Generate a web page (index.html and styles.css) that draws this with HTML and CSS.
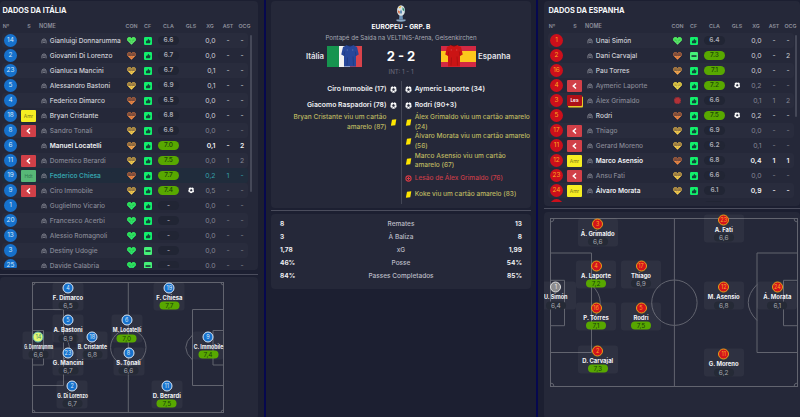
FILE: index.html
```html
<!DOCTYPE html>
<html lang="pt">
<head>
<meta charset="utf-8">
<title>Itália 2 - 2 Espanha</title>
<link rel="stylesheet" href="styles.css">
</head>
<body>
<svg width="0" height="0" class="defs" aria-hidden="true">
  <defs>
    <symbol id="person" viewBox="0 0 10 10"><path d="M1.6 9V5a3.4 3.4 0 0 1 6.8 0v4M3.4 7.6q1.6-1.4 3.2 0" fill="none" stroke="currentColor" stroke-width="1.5"/><circle cx="5" cy="4.6" r="1.3" fill="currentColor"/></symbol>
    <symbol id="heart" viewBox="0 0 18 16"><path d="M9 15.6 1.5 8.2C-.6 5.6.4 1.2 4.2.7 6.400.4 8 1.400 9 3c1-1.600 2.600-2.600 4.800-2.300C17.600 1.200 18.600 5.600 16.500 8.200Z"/></symbol>
    <symbol id="thumb" viewBox="0 0 16 16"><rect width="16" height="16" rx="2.500" fill="#12f06c"/><path d="M4 7.500h2.500L8.500 3.500q1.700 0 1.300 3.200h2.400q.9.600.6 1.800l-.8 3.300q-.3.900-1.200.9H4Z" fill="#12443a"/></symbol>
    <symbol id="minus" viewBox="0 0 16 16"><rect width="16" height="16" rx="2.500" fill="#45f078"/><rect x="3" y="6.300" width="10" height="3.600" fill="#1d4a3b"/></symbol>
    <symbol id="ball" viewBox="0 0 14 14"><circle cx="7" cy="7" r="6.300" fill="#fff"/><path d="m7 4.200 2.700 2-1 3.200H5.300l-1-3.200Z" fill="#252839"/><path d="M7 0v2.400M.4 5.600l2 .7M13.600 5.600l-2 .7M3 12.600l1.400-2M11 12.600l-1.400-2" stroke="#252839" stroke-width="1.800"/></symbol>
    <symbol id="card" viewBox="0 0 12 14"><path d="M3 1.400 11.600.4 9.600 12.600.8 13.400Z" fill="#ffe600"/></symbol>
    <symbol id="injury" viewBox="0 0 14 14"><circle cx="7" cy="7" r="5.200" fill="none" stroke="#d63b45" stroke-width="2.200"/><path d="M7 4v6M4 7h6" stroke="#d63b45" stroke-width="2"/></symbol>
    <symbol id="shirt" viewBox="0 0 36 46"><path d="M12 2q6 3 12 0l8 4 3.500 15-5.500 3V45H6V24L.5 21 4 6Z" fill="currentColor"/><path d="M12 2q6 5 12 0" fill="none" stroke="#0006" stroke-width="1.500"/><path d="M6 24 7.500 15M30 24 28.500 15M13 27l-1 16M24 25l1 18" stroke="#0003" stroke-width="1.500" fill="none"/><path d="M11.500 12h2M22.500 12h2" stroke="#fff6" stroke-width="1.500"/></symbol>
  </defs>
</svg>
<main class="screen">
  <section class="col col-left">
    <div class="panel squad squad-ita">
      <h2>DADOS DA ITÁLIA</h2>
      <div class="table" id="ita-table"></div>
    </div>
    <div class="rule"></div>
    <div class="panel pitch-panel ita" id="ita-pitch">
      <svg class="pitch" width="258" height="140" viewBox="0 277 258 140">
        <rect x="32.500" y="282.500" width="191" height="130"/>
        <path d="M128.300 282.500v130M32.500 309.500h31v76h-31M32.500 330.500h11v34.500h-11M223.500 309.500h-31v76h31M223.500 330.500h-10.500v34.500h10.500M63.500 335q12 12.500 0 25M192.500 335q-13.500 12.500 0 25M35 282.500q0 2.500-2.500 2.500M221 282.500q0 2.500 2.500 2.500M35 412.500q0-2.500-2.500-2.500M221 412.500q0-2.500 2.500-2.500"/>
        <circle cx="128.300" cy="347.400" r="17.700"/>
      </svg>
    </div>
  </section>
  <section class="col col-mid">
    <div class="panel match">
      <svg class="cup" viewBox="0 0 24 34"><path d="M3 29h18v3q-9 3-18 0Z" fill="#8ba8c4"/><path d="M9 20h6l1 9H8Z" fill="#6d93b8"/><ellipse cx="12" cy="11" rx="8" ry="10.500" fill="#d9e2e4"/><path d="M7 5q3-4 6-3l-3 5Z" fill="#e8b23c"/><path d="M15 4q5 4 4 9l-4-3Z" fill="#2e8a70"/><path d="M5 10q1 6 4 8l1-5Z" fill="#d46a45"/><path d="m12 9 2 5-2 5-2-5Z" fill="#4b7bad"/></svg>
      <h1>EUROPEU - GRP. B</h1>
      <p class="venue">Pontapé de Saída na VELTINS-Arena, Gelsenkirchen</p>
      <div class="score-row">
        <span class="team home">Itália</span>
        <span class="flag flag-ita"><svg class="shirt"><use href="#shirt"/></svg></span>
        <span class="score">2 - 2</span>
        <span class="flag flag-esp"><svg class="shirt"><use href="#shirt"/></svg></span>
        <span class="team away">Espanha</span>
      </div>
      <p class="half">INT: 1 - 1</p>
      <div class="events">
        <ul class="ev-home">
          <li class="goal"><span>Ciro Immobile (17)</span><svg><use href="#ball"/></svg></li>
          <li class="goal"><span>Giacomo Raspadori (78)</span><svg><use href="#ball"/></svg></li>
          <li class="booking two"><span>Bryan Cristante viu um cartão<br>amarelo (87)</span><svg><use href="#card"/></svg></li>
        </ul>
        <ul class="ev-away">
          <li class="goal"><svg><use href="#ball"/></svg><span>Aymeric Laporte (34)</span></li>
          <li class="goal"><svg><use href="#ball"/></svg><span>Rodri (90+3)</span></li>
          <li class="booking two"><svg><use href="#card"/></svg><span>Álex Grimaldo viu um cartão amarelo<br>(24)</span></li>
          <li class="booking two"><svg><use href="#card"/></svg><span>Álvaro Morata viu um cartão amarelo<br>(56)</span></li>
          <li class="booking two"><svg><use href="#card"/></svg><span>Marco Asensio viu um cartão<br>amarelo (67)</span></li>
          <li class="hurt"><svg><use href="#injury"/></svg><span>Lesão de Álex Grimaldo (76)</span></li>
          <li class="booking"><svg><use href="#card"/></svg><span>Koke viu um cartão amarelo (83)</span></li>
        </ul>
      </div>
    </div>
    <div class="rule"></div>
    <div class="panel stats">
      <div><b>8</b><span>Remates</span><b>13</b></div>
      <div><b>3</b><span>À Baliza</span><b>8</b></div>
      <div><b>1,78</b><span>xG</span><b>1,99</b></div>
      <div><b>46%</b><span>Posse</span><b>54%</b></div>
      <div><b>84%</b><span>Passes Completados</span><b>85%</b></div>
    </div>
  </section>
  <section class="col col-right">
    <div class="panel squad squad-esp">
      <h2>DADOS DA ESPANHA</h2>
      <div class="table" id="esp-table"></div>
    </div>
    <div class="rule"></div>
    <div class="panel pitch-panel esp" id="esp-pitch">
      <svg class="pitch" width="256" height="205" viewBox="544 212 256 205">
        <rect x="550.500" y="218.500" width="247" height="168"/>
        <path d="M674.400 218.500v168M550.500 253h41v99.500h-41M550.500 280.300h14v45.400h-14M797.500 253h-40.500v99.500h40.500M797.500 280.300h-14v45.400h14M591.500 284.500q17.500 18 0 36M757 284.500q-17.500 18 0 36M554 218.500q0 3.500-3.500 3.500M794 218.500q0 3.500 3.500 3.500M554 386.500q0-3.500-3.500-3.500M794 386.500q0-3.500 3.500-3.500"/>
        <circle cx="674.400" cy="302.700" r="22.700"/>
      </svg>
    </div>
  </section>
</main>
<script src="app.js"></script>
</body>
</html>
```
FILE: styles.css
```css
* { box-sizing: border-box; margin: 0; padding: 0; }
body {
  width: 800px; height: 417px; overflow: hidden;
  background: #1c1f31; color: #e4e5ea;
  font-family: Inter, "Liberation Sans", sans-serif; font-size: 7px;
}
.defs { display: block; height: 0; }
svg { flex: none; }
.screen { display: grid; grid-template-columns: 264px 274px 262px; height: 417px; }
.col { display: flex; flex-direction: column; padding-top: 1px; min-width: 0; }
.col-left { padding-right: 6px; }
.col-mid { border-left: 2px solid #06084f; border-right: 2px solid #06084f; padding-left: 5px; padding-right: 5px; }
.col-right { padding-left: 6px; }
.panel { background: #252839; border-radius: 4px; flex: none; overflow: hidden; }
.rule { height: 1px; background: #4b4d5d; flex: none; }

/* squad tables */
.squad { padding: 5px 0 0 1px; position: relative; }
.squad-ita { height: 269px; }
.squad-esp { height: 205px; padding-left: 3px; }
.squad h2 { font-size: 7.400px; line-height: 10px; font-weight: 700; color: #f5f6f8; padding-left: 1.400px; white-space: nowrap; }
.table { overflow: hidden; margin-top: 3px; width: 252px; }
#ita-table { height: 248.500px; }
#esp-table { height: 182.500px; }
.row {
  display: grid; height: 15px; width: 246px; align-items: center; border-radius: 3px; margin-left: 1px;
  grid-template-columns: 17px 20px 9px 75px 17px 15px 27px 18px 20px 16px 12px;
  color: #cfd0d7; white-space: nowrap; justify-items: center;
}
.row.odd { background: #292c3d; }
.row.head { height: 14px; padding-bottom: 1px; font-size: 5.300px; font-weight: 600; color: #8e909c; }
.head .name { padding-left: 0; margin-left: -9px; font-size: 5.500px; font-weight: 600; }
.head .num0 { margin-left: -9px; }
.head .ocg { margin-left: 5px; }
.name { justify-self: start; padding-left: 1.800px; font-size: 6.550px; font-weight: 500; }
.on .name, .on .n { color: #f0f1f4; font-weight: 600; }
.off { color: #858794; }
.hot { color: #35a0aa; background: #202c3c; }
.row.hot .name { font-weight: 600; }
.no { width: 13px; height: 13px; border-radius: 50%; background: #1671cc; color: #cfe6fb; font-size: 6.500px; line-height: 13px; text-align: center; }
.squad-esp .no { background: #cb0f1b; color: #ffa51f; }
.tag { width: 15px; height: 12px; border-radius: 1px; font-size: 4.800px; line-height: 12px; text-align: center; display: block; margin-left: -1px; }
.tag.amr { background: #f5ed22; color: #77731f; }
.tag.hdt { background: #57b877; color: #2f7651; }
.tag.les { background: #ad1018; color: #fff; height: 11px; line-height: 10px; font-weight: 600; box-shadow: 1px 1.500px 0 #e8c928; }
.tag.sub { background: #d14048; }
.tag svg { width: 15px; height: 12px; display: block; }
.person { width: 6px; height: 6px; color: #8b8d99; margin-left: 1.500px; }
.heart { width: 9px; height: 8px; }
.cf { width: 8px; height: 8px; }
.inj { width: 7px; height: 7px; border-radius: 50%; background: #b23238; border: 1px dotted #782a35; }
.pill { width: 20.500px; height: 9px; border-radius: 4.500px; background: #212534; color: #a9abb5; font-size: 6.500px; font-weight: 600; line-height: 9px; text-align: center; display: block; }
.pill.good { background: #58a800; color: #1c4708; font-weight: 500; }
.gls { width: 6.500px; height: 6.500px; }
.n { font-size: 6.800px; }
.n.xg { justify-self: end; padding-right: 4.500px; }
.thumbbar { position: absolute; right: 6px; top: 34px; width: 2px; height: 157px; border-radius: 1px; background: #454858; }
.squad-esp .thumbbar { right: 3px; height: 82px; }

/* pitches */
.pitch-panel { position: relative; }
.ita.pitch-panel { height: 142px; }
.esp.pitch-panel { height: 207px; }
.pitch { display: block; fill: none; stroke: #62646f; stroke-width: 1; }
.player {
  position: absolute; width: 40px; height: 28px; border-radius: 3px; transform: translate(-50%, -5.500px);
  background: #ffffff0b; display: flex; flex-direction: column; align-items: center; white-space: nowrap;
}
.ita .player { width: 31px; }
.disc { width: 11px; height: 11px; flex: none; border-radius: 50%; border: 1px solid #d8e6f5; background: #1671cc; color: #d6ebff; font-size: 5.500px; line-height: 9px; text-align: center; }
.esp .disc { background: #d3141c; border-color: #e9a115; color: #ffa51f; }
.esp .gk .disc { background: #8c8c8e; border-color: #e0e0e0; color: #eee; }
.ita .gk .disc { background: #e4fa72; border-color: #5cb6b0; color: #469070; }
.pname { font-size: 5.900px; font-weight: 700; color: #f2f3f6; line-height: 8px; }
.tight .pname { transform: scaleX(.62); }
.snug .pname { transform: scaleX(.8); }
.mid .pname { transform: scaleX(.87); }
.esp .gk .pname { transform: scaleX(.93); }
.rate { width: 20px; height: 8px; border-radius: 4px; background: #252a36; color: #a6a8b0; font-size: 6.500px; line-height: 8px; text-align: center; margin-top: .3px; }
.rate.good { background: #58a800; color: #17420c; }

/* match summary */
.match { height: 207px; display: flex; flex-direction: column; align-items: center; }
.cup { width: 12px; height: 17px; margin-top: 4px; }
h1 { font-size: 6.600px; line-height: 9px; margin-top: 1px; font-weight: 700; color: #fff; white-space: nowrap; }
.venue { font-size: 6.150px; line-height: 9px; margin-top: 1px; color: #a6a8b3; white-space: nowrap; }
.score-row { display: grid; grid-template-columns: 53px 2.500px 35px 79px 35px 2.500px 53px; align-items: center; height: 22px; margin-top: 3px; }
.team { font-size: 7.800px; font-weight: 600; color: #e4e5e9; }
.home { text-align: right; }
.away { grid-column: 7; }
.flag-ita { grid-column: 3; background: linear-gradient(90deg, #16944f 33%, #f2f2f2 33% 66%, #d9434b 66%); }
.flag-esp { grid-column: 5; background: linear-gradient(#d32943 25%, #fcc81c 25% 75%, #d32943 75%); }
.flag { height: 21px; display: flex; align-items: flex-end; }
.shirt { width: 18px; height: 23px; }
.flag-ita .shirt { color: #27479a; margin-left: 14.300px; }
.flag-esp .shirt { color: #cb1414; margin-left: 4px; }
.score { grid-column: 4; font-size: 13px; font-weight: 700; text-align: center; color: #fff; }
.half { font-size: 6.200px; line-height: 8px; color: #6c6e7c; margin-top: .5px; }
.events { display: grid; grid-template-columns: 130.500px 129.500px; width: 260px; height: 123px; margin-top: 5.500px; }
.events ul { list-style: none; }
.ev-home { border-right: 1px solid #434655; }
.events li { display: flex; align-items: center; height: 16px; font-size: 6.550px; line-height: 9.500px; white-space: nowrap; }
.events li.two { height: 19.330px; }
.events svg { width: 7px; height: 7px; }
.ev-home li { justify-content: flex-end; text-align: right; gap: 3px; padding-right: 4px; }
.ev-away li { gap: 2.700px; padding-left: 3.500px; }
.events .goal { font-weight: 600; color: #eff0f3; font-size: 6.850px; }
.booking { color: #bcb761; font-weight: 500; }
.hurt { color: #c63d48; font-weight: 500; }

.match + .rule { margin: 2px 0 3px; }
.stats { height: 75px; padding: 3.800px 9px; }
.stats div { display: grid; grid-template-columns: 50px 1fr 50px; height: 12.870px; align-items: center; font-size: 6.500px; }
.stats span { text-align: center; color: #bcbdc6; font-weight: 500; }
.stats b { font-weight: 700; color: #eeeff2; }
.stats b:last-child { text-align: right; }
.squad-ita + .rule { margin: 3.500px 0 2.500px; }
.squad-esp + .rule { margin: 2px 0 3px; }
```
FILE: app.js
```js
const hearts = {
  g: ['#2ce25c', '#2cf56c'], l: ['#4be85c', '#5df26c'],
  o: ['#87503b', '#f48b45'], b: ['#99703f', '#ffad50'],
  y: ['#a58443', '#ffd34f'], v: ['#d4bd42', '#f5df4f']
};
const ita = [
  [14, '', 'Gianluigi Donnarumma', 'l', 't', '6.6', 0, '0,0', '-', '-', ''],
  [2, '', 'Giovanni Di Lorenzo', 'o', 't', '6.7', 0, '0,0', '-', '-', ''],
  [23, '', 'Gianluca Mancini', 'y', 't', '6.7', 0, '0,1', '-', '-', ''],
  [5, '', 'Alessandro Bastoni', 'y', 't', '6.9', 0, '0,1', '-', '-', ''],
  [4, '', 'Federico Dimarco', 'o', 't', '6.5', 0, '0,0', '-', '-', ''],
  [18, 'amr', 'Bryan Cristante', 'o', 't', '6.8', 0, '0,0', '-', '-', ''],
  [8, 'sub', 'Sandro Tonali', 'y', 't', '6.6', 0, '0,0', '-', '-', 'off'],
  [6, '', 'Manuel Locatelli', 'b', 't', '7.0', 0, '0,1', '-', '2', 'on'],
  [11, 'sub', 'Domenico Berardi', 'y', 't', '7.5', 0, '0,0', '1', '2', 'off'],
  [19, 'hdt', 'Federico Chiesa', 'o', 't', '7.7', 0, '0,2', '1', '-', 'hot'],
  [9, 'sub', 'Ciro Immobile', 'y', 't', '7.4', 1, '0,5', '-', '-', 'off'],
  [1, '', 'Guglielmo Vicario', 'g', 't', '-', 0, '0,0', '-', '-', 'off'],
  [20, '', 'Francesco Acerbi', 'g', 't', '-', 0, '0,0', '-', '-', 'off'],
  [13, '', 'Alessio Romagnoli', 'g', 't', '-', 0, '0,0', '-', '-', 'off'],
  [3, '', 'Destiny Udogie', 'g', 'm', '-', 0, '0,0', '-', '-', 'off'],
  [25, '', 'Davide Calabria', 'g', 'm', '-', 0, '0,0', '-', '-', 'off']
];
const esp = [
  [1, '', 'Unai Simón', 'l', 't', '6.4', 0, '0,0', '-', '-', ''],
  [2, '', 'Dani Carvajal', 'o', 'm', '7.3', 0, '0,0', '-', '2', ''],
  [16, '', 'Pau Torres', 'b', 't', '7.1', 0, '0,0', '-', '-', ''],
  [4, 'sub', 'Aymeric Laporte', 'v', 't', '7.2', 1, '0,2', '-', '-', 'off'],
  [3, 'les', 'Álex Grimaldo', 'x', 't', '6.6', 0, '0,1', '1', '2', 'off'],
  [5, '', 'Rodri', 'o', 't', '7.5', 1, '0,2', '-', '-', ''],
  [17, 'sub', 'Thiago', 'y', 't', '6.9', 0, '0,0', '-', '-', 'off'],
  [11, 'sub', 'Gerard Moreno', 'y', 't', '6.2', 0, '0,1', '-', '-', 'off'],
  [12, 'amr', 'Marco Asensio', 'o', 't', '6.8', 0, '0,4', '1', '1', 'on'],
  [23, 'sub', 'Ansu Fati', 'y', 't', '6.6', 0, '0,0', '-', '-', 'off'],
  [24, 'amr', 'Álvaro Morata', 'y', 't', '6.1', 0, '0,9', '-', '-', 'on'],
  ['', '', '', 'g', 'm', '', 0, '', '', '', 'off']
];
const labels = { amr: 'Amr', hdt: 'Hdt', les: 'Les' };
const tag = t => !t ? '<i></i>' : t === 'sub'
  ? '<span class="tag sub"><svg viewBox="0 0 15 12"><path d="M9 3.500 6.300 6 9 8.500" fill="none" stroke="#fff" stroke-width="1.500"/></svg></span>'
  : `<span class="tag ${t}">${labels[t]}</span>`;
const heart = h => {
  if (h === 'x') return '<span class="inj"></span>';
  const [a, b] = hearts[h];
  return `<svg class="heart" viewBox="0 0 18 16"><use href="#heart" fill="${b}"/><path d="M1.500 8C-.6 5.400.4 1.200 4.200.7 6.400.4 8 1.400 9 3c1-1.600 2.600-2.600 4.800-2.300 3.800.5 4.800 4.700 2.700 7.300Z" fill="${a}"/><path d="M3.500 5.500 7 6.800M14.500 5.500 11 6.800M6 9.600q3 1.600 6 0" fill="none" stroke="#252839" stroke-opacity=".45" stroke-width="1.300"/></svg>`;
};
const head = '<div class="row head"><span class="num0">Nº</span><span>S</span><i></i><span class="name">NOME</span><span>CON</span><span>CF</span><span>CLA</span><span>GLS</span><span>XG</span><span>AST</span><span class="ocg">OCG</span></div>';
function table(id, rows) {
  const el = document.getElementById(id);
  el.innerHTML = head + rows.map((r, i) => `<div class="row ${i % 2 ? '' : 'odd'} ${r[10]}">
    <span class="no">${r[0]}</span>${tag(r[1])}<svg class="person"><use href="#person"/></svg>
    <span class="name">${r[2]}</span>${heart(r[3])}
    <svg class="cf"><use href="#${r[4] === 't' ? 'thumb' : 'minus'}"/></svg>
    <span class="pill ${parseFloat(r[5]) >= 7 ? 'good' : ''}">${r[5]}</span>
    ${r[6] ? '<svg class="gls"><use href="#ball"/></svg>' : '<i></i>'}
    <span class="n xg">${r[7]}</span><span class="n">${r[8]}</span><span class="n">${r[9]}</span></div>`).join('');
  el.insertAdjacentHTML('afterend', '<div class="thumbbar"></div>');
}
table('ita-table', ita);
table('esp-table', esp);

// Each entry: x and y of the disc within the panel, shirt number, name, rating, modifiers
const itaXI = [
  [68, 11, 4, 'F. Dimarco', '6,5', ''], [169.3, 11, 19, 'F. Chiesa', '7,7', ''],
  [68, 43.3, 5, 'A. Bastoni', '6,9', ''], [126.7, 43.3, 6, 'M. Locatelli', '7,0', 'mid'],
  [38.3, 59.8, 14, 'G. Donnarumma', '6,6', 'gk tight'], [92.3, 59.8, 18, 'B. Cristante', '6,8', 'mid'],
  [208, 59.8, 9, 'C. Immobile', '7,4', 'mid'], [68, 75.800, 23, 'G. Mancini', '6,7', ''],
  [128.500, 75.800, 8, 'S. Tonali', '6,6', ''], [72.300, 108.500, 2, 'G. Di Lorenzo', '6,7', 'snug'],
  [166.800, 108.500, 11, 'D. Berardi', '7,5', '']
];
const espXI = [
  [53.700, 11.700, 3, 'Á. Grimaldo', '6,6', ''], [179.700, 7.700, 23, 'A. Fati', '6,6', ''],
  [52, 54, 4, 'A. Laporte', '7,2', ''], [97, 54, 17, 'Thiago', '6,9', ''],
  [11.900, 75.300, 1, 'U. Simón', '6,4', 'gk'], [179.700, 75.300, 12, 'M. Asensio', '6,8', ''],
  [233.300, 75.300, 24, 'Á. Morata', '6,1', ''], [52, 96, 16, 'P. Torres', '7,1', ''],
  [97, 96, 5, 'Rodri', '7,5', ''], [53.700, 138.700, 2, 'D. Carvajal', '7,3', ''],
  [179.700, 142.300, 11, 'G. Moreno', '6,2', '']
];
function pitch(id, players) {
  document.getElementById(id).insertAdjacentHTML('beforeend', players.map(p =>
    `<div class="player ${p[5]}" style="left:${p[0]}px;top:${p[1]}px"><span class="disc">${p[2]}</span><span class="pname">${p[3]}</span><span class="rate ${parseFloat(p[4]) >= 7 ? 'good' : ''}">${p[4]}</span></div>`).join(''));
}
pitch('ita-pitch', itaXI);
pitch('esp-pitch', espXI);
```
